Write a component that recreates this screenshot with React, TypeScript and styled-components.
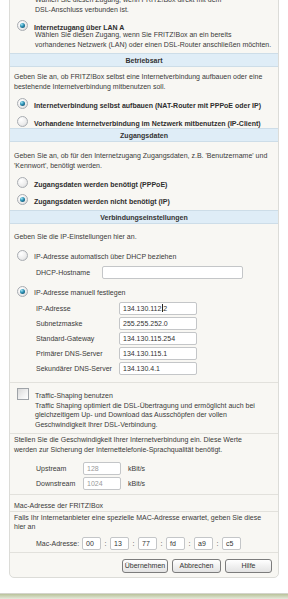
import React from 'react';
import styled, { createGlobalStyle, css } from 'styled-components';

const GlobalStyle = createGlobalStyle`
  body {
    margin: 0;
    background: #ffffff;
    font-family: 'Liberation Sans', Arial, sans-serif;
    font-size: 7px;
    color: #3a3a3a;
    overflow: hidden;
  }
`;

const Page = styled.div`
  width: 288px;
  height: 599px;
  display: flex;
  flex-direction: column;
`;

const Panel = styled.div`
  margin: -11px 9px 0 9px;
  background: #f8f7f3;
  border: 1px solid #dcdcd8;
  border-radius: 0 0 5px 5px;
  overflow: hidden;
`;

const Section = styled.div<{ $pt?: number; $pb?: number; $line?: boolean }>`
  padding: ${(p) => p.$pt ?? 5}px 6px ${(p) => p.$pb ?? 5}px 3px;
  border-top: ${(p) => (p.$line ? '1px solid #e2e1dc' : 'none')};
`;

const Header = styled.div`
  height: 14px;
  line-height: 13px;
  box-sizing: border-box;
  background: #dfedf7;
  border-top: 1px solid #cddde8;
  border-bottom: 1px solid #cddde8;
  text-align: center;
  font-weight: bold;
  color: #333;
`;

const Para = styled.p<{ $indent?: number; $mt?: number }>`
  margin: ${(p) => p.$mt ?? 0}px 0 0 ${(p) => p.$indent ?? 0}px;
  line-height: 9.5px;
`;

const OptionRow = styled.div<{ $mt?: number }>`
  display: flex;
  align-items: flex-end;
  gap: 6px;
  margin-top: ${(p) => p.$mt ?? 0}px;
  padding-left: 4px;
`;

const OptionLabel = styled.span<{ $bold?: boolean }>`
  line-height: 9.5px;
  font-weight: ${(p) => (p.$bold ? 'bold' : 'normal')};
  color: ${(p) => (p.$bold ? '#2e2e2e' : '#3a3a3a')};
`;

const Radio = styled.span<{ $checked?: boolean }>`
  position: relative;
  flex: none;
  width: 11px;
  height: 11px;
  margin-bottom: 1px;
  box-sizing: border-box;
  border-radius: 50%;
  border: 1px solid #a9adb2;
  background: radial-gradient(circle at 35% 30%, #ffffff 0%, #ececec 60%, #cfd1d3 100%);
  ${(p) =>
    p.$checked &&
    css`
      &::after {
        content: '';
        position: absolute;
        inset: 2px;
        border-radius: 50%;
        background: radial-gradient(circle at 35% 30%, #9fe3f5 0%, #2a8fb2 45%, #0b3b55 100%);
      }
    `}
`;

const Checkbox = styled.span`
  flex: none;
  width: 12px;
  height: 12px;
  margin-bottom: 1px;
  box-sizing: border-box;
  border: 1px solid #9fa3a8;
  background: linear-gradient(135deg, #d9d9d9 0%, #f2f2f2 60%, #ffffff 100%);
`;

const FieldRow = styled.div<{ $mt?: number; $h?: number }>`
  display: flex;
  align-items: center;
  height: ${(p) => p.$h ?? 15}px;
  margin-top: ${(p) => p.$mt ?? 0}px;
  padding-left: 23px;
`;

const FieldLabel = styled.span<{ $w: number }>`
  width: ${(p) => p.$w}px;
  flex: none;
`;

const Input = styled.div<{ $w: number; $muted?: boolean }>`
  width: ${(p) => p.$w}px;
  height: 13px;
  box-sizing: border-box;
  flex: none;
  background: #ffffff;
  border: 1px solid #c4c6c8;
  border-radius: 2px;
  padding-left: 3px;
  line-height: 11px;
  color: ${(p) => (p.$muted ? '#9a9a9a' : '#333')};
`;

const Caret = styled.span`
  display: inline-block;
  width: 1px;
  height: 8px;
  background: #222;
  vertical-align: -1px;
  margin-left: -1px;
`;

const Unit = styled.span`
  margin-left: 7px;
`;

const Colon = styled.span`
  width: 9px;
  text-align: center;
  flex: none;
`;

const ButtonBar = styled.div`
  display: flex;
  justify-content: flex-end;
  gap: 4px;
  padding: 6px 6px 4px 0;
  border-top: 1px solid #e2e1dc;
`;

const Button = styled.div<{ $w: number }>`
  width: ${(p) => p.$w}px;
  height: 14px;
  box-sizing: border-box;
  border: 1px solid #7c7c7c;
  border-radius: 3px;
  background: linear-gradient(#ffffff, #e3e3e3);
  text-align: center;
  line-height: 12px;
  color: #333;
`;

const Spacer = styled.div`
  flex: 1;
`;

const Footer = styled.div`
  height: 5px;
  border-top: 1px solid #d4d4cc;
  background: linear-gradient(#b9c39a, #e6e9dc);
`;

const ipRows = [
  ['IP-Adresse', '134.130.112.2'],
  ['Subnetzmaske', '255.255.252.0'],
  ['Standard-Gateway', '134.130.115.254'],
  ['Primärer DNS-Server', '134.130.115.1'],
  ['Sekundärer DNS-Server', '134.130.4.1'],
];

const macParts = ['00', '13', '77', 'fd', 'a9', 'c5'];

export default function App() {
  return (
    <Page>
      <GlobalStyle />
      <Panel>
        <Section $pt={5} $pb={4}>
          <Para $indent={22}>Wählen Sie diesen Zugang, wenn FRITZ!Box direkt mit dem</Para>
          <Para $indent={22}>DSL-Anschluss verbunden ist.</Para>
          <OptionRow $mt={6}>
            <Radio $checked />
            <OptionLabel $bold>Internetzugang über LAN A</OptionLabel>
          </OptionRow>
          <Para $indent={22} $mt={-2}>
            Wählen Sie diesen Zugang, wenn Sie FRITZ!Box an ein bereits
            <br />
            vorhandenes Netzwerk (LAN) oder einen DSL-Router anschließen möchten.
          </Para>
        </Section>

        <Header>Betriebsart</Header>
        <Section $pt={5} $pb={0}>
          <Para $indent={1}>
            Geben Sie an, ob FRITZ!Box selbst eine Internetverbindung aufbauen oder eine
            <br />
            bestehende Internetverbindung mitbenutzen soll.
          </Para>
          <OptionRow $mt={7}>
            <Radio $checked />
            <OptionLabel $bold>Internetverbindung selbst aufbauen (NAT-Router mit PPPoE oder IP)</OptionLabel>
          </OptionRow>
          <OptionRow $mt={6}>
            <Radio />
            <OptionLabel $bold>Vorhandene Internetverbindung im Netzwerk mitbenutzen (IP-Client)</OptionLabel>
          </OptionRow>
        </Section>

        <Header>Zugangsdaten</Header>
        <Section $pt={9} $pb={4}>
          <Para $indent={1}>
            Geben Sie an, ob für den Internetzugang Zugangsdaten, z.B. 'Benutzername' und
            <br />
            'Kennwort', benötigt werden.
          </Para>
          <OptionRow $mt={7}>
            <Radio />
            <OptionLabel $bold>Zugangsdaten werden benötigt (PPPoE)</OptionLabel>
          </OptionRow>
          <OptionRow $mt={5}>
            <Radio $checked />
            <OptionLabel $bold>Zugangsdaten werden nicht benötigt (IP)</OptionLabel>
          </OptionRow>
        </Section>

        <Header>Verbindungseinstellungen</Header>
        <Section $pt={8} $pb={6}>
          <Para $indent={1}>Geben Sie die IP-Einstellungen hier an.</Para>
          <OptionRow $mt={8}>
            <Radio />
            <OptionLabel>IP-Adresse automatisch über DHCP beziehen</OptionLabel>
          </OptionRow>
          <FieldRow $mt={3}>
            <FieldLabel $w={66}>DHCP-Hostname</FieldLabel>
            <Input $w={141} />
          </FieldRow>
          <OptionRow $mt={6}>
            <Radio $checked />
            <OptionLabel>IP-Adresse manuell festlegen</OptionLabel>
          </OptionRow>
          <FieldRow $mt={3}>
            <FieldLabel $w={83}>{ipRows[0][0]}</FieldLabel>
            <Input $w={78}>
              134.130.112.<Caret />2
            </Input>
          </FieldRow>
          {ipRows.slice(1).map(([label, value]) => (
            <FieldRow key={label}>
              <FieldLabel $w={83}>{label}</FieldLabel>
              <Input $w={78}>{value}</Input>
            </FieldRow>
          ))}
        </Section>

        <Section $line $pt={5} $pb={4}>
          <OptionRow>
            <Checkbox />
            <OptionLabel>Traffic-Shaping benutzen</OptionLabel>
          </OptionRow>
          <Para $indent={22}>
            Traffic Shaping optimiert die DSL-Übertragung und ermöglicht auch bei
            <br />
            gleichzeitigem Up- und Download das Ausschöpfen der vollen
            <br />
            Geschwindigkeit Ihrer DSL-Verbindung.
          </Para>
        </Section>

        <Section $line $pt={1} $pb={3}>
          <Para $indent={1}>
            Stellen Sie die Geschwindigkeit Ihrer Internetverbindung ein. Diese Werte
            <br />
            werden zur Sicherung der Internettelefonie-Sprachqualität benötigt.
          </Para>
          <FieldRow $mt={7}>
            <FieldLabel $w={47}>Upstream</FieldLabel>
            <Input $w={38} $muted>
              128
            </Input>
            <Unit>kBit/s</Unit>
          </FieldRow>
          <FieldRow>
            <FieldLabel $w={47}>Downstream</FieldLabel>
            <Input $w={38} $muted>
              1024
            </Input>
            <Unit>kBit/s</Unit>
          </FieldRow>
        </Section>

        <Section $line $pt={6} $pb={0}>
          <Para $indent={1}>Mac-Adresse der FRITZ!Box</Para>
        </Section>
        <Section $line $pt={1} $pb={1}>
          <Para $indent={1}>
            Falls Ihr Internetanbieter eine spezielle MAC-Adresse erwartet, geben Sie diese
            <br />
            hier an
          </Para>
          <FieldRow $mt={5} $h={14}>
            <FieldLabel $w={46}>Mac-Adresse:</FieldLabel>
            {macParts.map((part, i) => (
              <React.Fragment key={i}>
                {i > 0 && <Colon>:</Colon>}
                <Input $w={19}>{part}</Input>
              </React.Fragment>
            ))}
          </FieldRow>
        </Section>

        <ButtonBar>
          <Button $w={46}>Übernehmen</Button>
          <Button $w={49}>Abbrechen</Button>
          <Button $w={47}>Hilfe</Button>
        </ButtonBar>
      </Panel>
      <Spacer />
      <Footer />
    </Page>
  );
}
